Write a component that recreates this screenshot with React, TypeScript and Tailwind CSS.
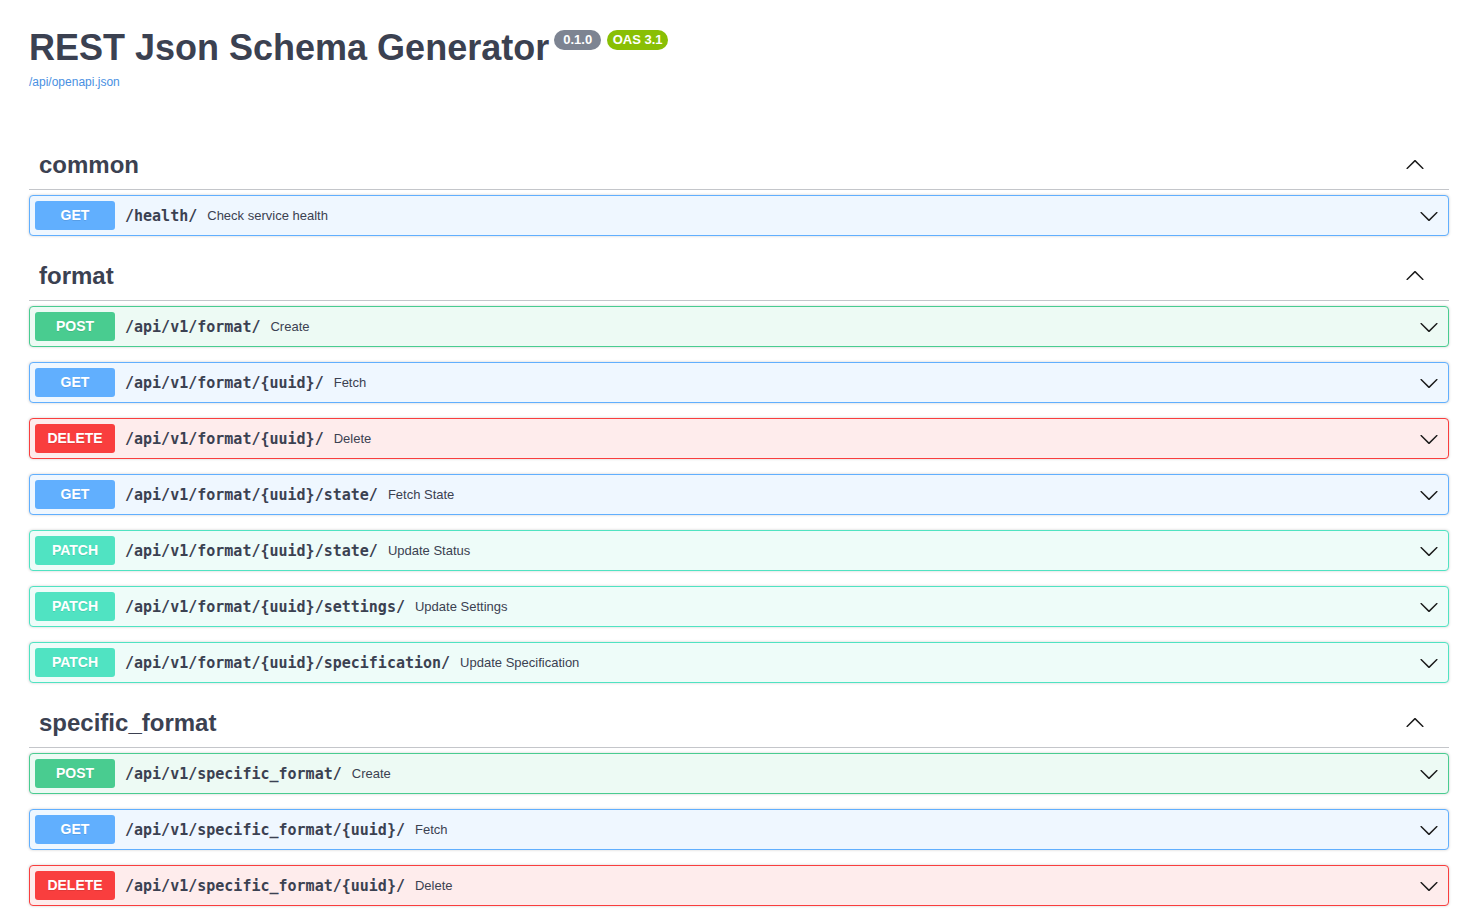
import React from 'react';

type Method = 'GET' | 'POST' | 'DELETE' | 'PATCH';

interface Op {
  method: Method;
  path: string;
  summary: string;
}

interface Tag {
  name: string;
  ops: Op[];
}

const methodStyles: Record<Method, { row: string; badge: string }> = {
  GET: { row: 'bg-[#eff7ff] border-[#61affe]', badge: 'bg-[#61affe]' },
  POST: { row: 'bg-[#edfaf4] border-[#49cc90]', badge: 'bg-[#49cc90]' },
  DELETE: { row: 'bg-[#feecec] border-[#f93e3e]', badge: 'bg-[#f93e3e]' },
  PATCH: { row: 'bg-[#eefcf9] border-[#50e3c2]', badge: 'bg-[#50e3c2]' },
};

const tags: Tag[] = [
  {
    name: 'common',
    ops: [{ method: 'GET', path: '/health/', summary: 'Check service health' }],
  },
  {
    name: 'format',
    ops: [
      { method: 'POST', path: '/api/v1/format/', summary: 'Create' },
      { method: 'GET', path: '/api/v1/format/{uuid}/', summary: 'Fetch' },
      { method: 'DELETE', path: '/api/v1/format/{uuid}/', summary: 'Delete' },
      { method: 'GET', path: '/api/v1/format/{uuid}/state/', summary: 'Fetch State' },
      { method: 'PATCH', path: '/api/v1/format/{uuid}/state/', summary: 'Update Status' },
      { method: 'PATCH', path: '/api/v1/format/{uuid}/settings/', summary: 'Update Settings' },
      { method: 'PATCH', path: '/api/v1/format/{uuid}/specification/', summary: 'Update Specification' },
    ],
  },
  {
    name: 'specific_format',
    ops: [
      { method: 'POST', path: '/api/v1/specific_format/', summary: 'Create' },
      { method: 'GET', path: '/api/v1/specific_format/{uuid}/', summary: 'Fetch' },
      { method: 'DELETE', path: '/api/v1/specific_format/{uuid}/', summary: 'Delete' },
    ],
  },
];

const Arrow = ({ up = false }: { up?: boolean }) => (
  <svg
    width="20"
    height="20"
    viewBox="0 0 20 20"
    className={`fill-current text-[#1b1b1b] ${up ? 'rotate-180' : ''}`}
  >
    <path d="M17.418 6.109c.272-.268.709-.268.979 0s.271.701 0 .969l-7.908 7.83c-.27.268-.707.268-.979 0l-7.908-7.83c-.27-.268-.27-.701 0-.969.271-.268.709-.268.979 0L10 13.25l7.418-7.141z" />
  </svg>
);

const OpRow = ({ op }: { op: Op }) => {
  const s = methodStyles[op.method];
  return (
    <div
      className={`mb-[15px] flex h-[41px] items-center rounded-[4px] border p-[5px] shadow-[0_0_3px_rgba(0,0,0,0.19)] ${s.row}`}
    >
      <span
        className={`flex h-[29px] w-[80px] shrink-0 items-center justify-center rounded-[3px] text-[14px] font-bold text-white [text-shadow:0_1px_0_rgba(0,0,0,0.1)] ${s.badge}`}
      >
        {op.method}
      </span>
      <span className="px-[10px] pt-[2px] font-['DejaVu_Sans_Mono',monospace] text-[15px] font-bold text-[#3b4151]">
        {op.path}
      </span>
      <span className="pt-[1px] text-[13px] text-[#3b4151]">{op.summary}</span>
      <span className="ml-auto mr-[4px] flex items-center">
        <Arrow />
      </span>
    </div>
  );
};

export default function App() {
  return (
    <div className="min-h-screen bg-white font-['Liberation_Sans',Arial,sans-serif] text-[#3b4151]">
      <div className="ml-[29px] w-[1420px] pt-[27px]">
        <div className="flex items-start">
          <h2 className="text-[36px] font-bold leading-[41px]">REST Json Schema Generator</h2>
          <span className="ml-[5px] mt-[3px] flex h-[20px] w-[47px] items-center justify-center rounded-full bg-[#7d8492] text-[13px] font-bold text-white">
            0.1.0
          </span>
          <span className="ml-[6px] mt-[3px] flex h-[20px] w-[61px] items-center justify-center rounded-full bg-[#89bf04] text-[13px] font-bold text-white">
            OAS 3.1
          </span>
        </div>
        <a className="mt-[7px] block text-[12px] leading-[14px] text-[#4990e2]">/api/openapi.json</a>

        <div className="mt-[51px]">
          {tags.map((tag) => (
            <section key={tag.name}>
              <div className="mb-[5px] flex h-[50px] items-center border-b border-[rgba(59,65,81,0.3)] pl-[10px] pr-[24px]">
                <h3 className="text-[24px] font-bold leading-[29px]">{tag.name}</h3>
                <span className="ml-auto flex items-center">
                  <Arrow up />
                </span>
              </div>
              {tag.ops.map((op, i) => (
                <OpRow key={i} op={op} />
              ))}
            </section>
          ))}
        </div>
      </div>
    </div>
  );
}
